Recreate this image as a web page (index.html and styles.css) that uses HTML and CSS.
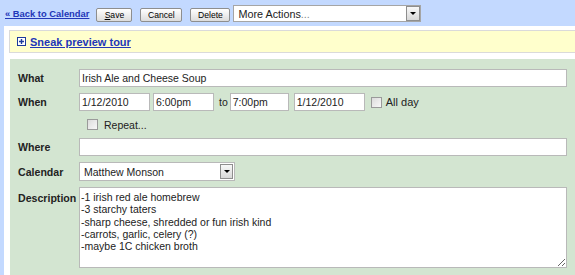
FILE: index.html
```html
<!DOCTYPE html>
<html lang="en">
<head>
    <meta charset="UTF-8">
    <title>Edit event</title>
    <link rel="stylesheet" href="styles.css">
</head>
<body>
    <div class="page">
        <div class="toolbar">
            <a class="back-link" href="#">&laquo; Back to Calendar</a>
            <span class="btn btn-save"><u>S</u>ave</span>
            <span class="btn btn-cancel">Cancel</span>
            <span class="btn btn-delete">Delete</span>
            <div class="actions-select">
                <span class="actions-text">More Actions<span class="dots">...</span></span>
                <span class="drop-btn"><span class="tri"></span></span>
            </div>
        </div>

        <div class="main">
            <div class="tour-box">
                <svg class="plus-icon" width="9" height="9" viewBox="0 0 9 9">
                    <rect x="0.5" y="0.5" width="8" height="8" fill="#fff" stroke="#1d3a9c"/>
                    <path d="M2 4.5h5M4.5 2v5" stroke="#1d3a9c" stroke-width="1.4"/>
                </svg>
                <a class="tour-link" href="#">Sneak preview tour</a>
            </div>

            <div class="event-panel">
                <div class="field-label">What</div>
                <div class="field"><div class="text-input wide">Irish Ale and Cheese Soup</div></div>

                <div class="field-label">When</div>
                <div class="field when-row">
                    <div class="text-input date">1/12/2010</div>
                    <div class="text-input time1">6:00pm</div>
                    <span class="to">to</span>
                    <div class="text-input time2">7:00pm</div>
                    <div class="text-input date date2">1/12/2010</div>
                    <span class="checkbox"></span>
                    <span class="allday">All day</span>
                </div>

                <div class="field-label"></div>
                <div class="field repeat-row">
                    <span class="checkbox"></span>
                    <span class="repeat">Repeat...</span>
                </div>

                <div class="field-label">Where</div>
                <div class="field"><div class="text-input wide"></div></div>

                <div class="field-label">Calendar</div>
                <div class="field">
                    <div class="cal-select">
                        <span>Matthew Monson</span>
                        <span class="drop-btn small"><span class="tri"></span></span>
                    </div>
                </div>

                <div class="field-label label-top">Description</div>
                <div class="field">
                    <textarea class="description" readonly>-1 irish red ale homebrew
-3 starchy taters
-sharp cheese, shredded or fun irish kind
-carrots, garlic, celery (?)
-maybe 1C chicken broth</textarea>
                </div>
            </div>
        </div>
    </div>
</body>
</html>
```

FILE: styles.css
```css
/* Event edit page */
body {
    margin: 0;
    font-family: "Liberation Sans", Arial, sans-serif;
    color: #222;
}

.page {
    background-color: #c3d9ff;
    padding-left: 4px;
    height: 275px;
    overflow: hidden;
}

.toolbar {
    height: 26px;
    display: flex;
    align-items: center;
    padding-left: 1px;
    padding-top: 4px;
    box-sizing: border-box;
}

.back-link {
    color: #2236b8;
    font-size: 9.4px;
    font-weight: bold;
    margin-right: 7px;
    margin-top: -3px;
}

.btn {
    display: inline-flex;
    align-items: center;
    justify-content: center;
    box-sizing: border-box;
    height: 14px;
    margin-right: 8px;
    margin-top: -1px;
    border: 1px solid #8e8e8e;
    border-radius: 2px;
    background: linear-gradient(#ffffff, #dcdcdc);
    font-size: 8.6px;
    color: #000;
}

.btn-save { width: 36px; }
.btn-cancel { width: 42px; }
.btn-delete { width: 40px; margin-right: 3px; }

.actions-select {
    width: 188px;
    height: 17px;
    box-sizing: border-box;
    margin-top: -3px;
    background: #fff;
    border: 1px solid #a5a5a5;
    display: flex;
    align-items: center;
    justify-content: space-between;
    padding-left: 4px;
}

.actions-text {
    font-size: 10.8px;
    color: #222;
}

.dots {
    color: #888;
}

.drop-btn {
    width: 14px;
    height: 15px;
    box-sizing: border-box;
    border: 1px solid #8e8e8e;
    background: linear-gradient(#f8f8f8, #d8d8d8);
    display: flex;
    align-items: center;
    justify-content: center;
}

.drop-btn.small {
    width: 13px;
    height: 15px;
    margin-right: 1px;
}

.tri {
    width: 0;
    height: 0;
    border-left: 3px solid transparent;
    border-right: 3px solid transparent;
    border-top: 3px solid #000;
}

.main {
    background: #fff;
    padding: 4px 0 0 5px;
    height: 249px;
}

.tour-box {
    height: 23px;
    box-sizing: border-box;
    background: #ffffcc;
    border: 1px solid #dadada;
    border-right: none;
    display: flex;
    align-items: center;
    padding-left: 7px;
    margin-bottom: 6px;
}

.plus-icon {
    margin-right: 4px;
}

.tour-link {
    color: #2236b8;
    font-size: 11px;
    font-weight: bold;
}

.event-panel {
    background: #d3e5d1;
    margin-left: 1px;
    padding: 10px 8px 40px 8px;
    display: grid;
    grid-template-columns: 61px 1fr;
    grid-template-rows: 18px 18px 15px 18px 19px 81px;
    row-gap: 6px;
}

.field-label {
    font-size: 10.6px;
    font-weight: bold;
    color: #222;
    display: flex;
    align-items: center;
}

.label-top {
    align-items: flex-start;
    padding-top: 5px;
}

.field {
    display: flex;
    align-items: center;
    font-size: 10.5px;
}

.text-input {
    height: 18px;
    box-sizing: border-box;
    background: #fff;
    border: 1px solid #b9b9b9;
    padding-left: 2px;
    display: flex;
    align-items: center;
    font-size: 10.5px;
    color: #222;
}

.wide { width: 100%; }
.date { width: 71px; margin-right: 3px; }
.time1 { width: 61px; }
.time2 { width: 59px; margin-right: 5px; }
.date2 { margin-right: 6px; }

.to {
    margin: 0 2px 0 5px;
}

.checkbox {
    width: 9px;
    height: 9px;
    border: 1px solid #9a9a9a;
    background: linear-gradient(135deg, #dcdcdc, #f8f8f8);
    margin-right: 4px;
}

.allday {
    font-size: 11px;
}

.repeat-row {
    padding-left: 8px;
}

.repeat-row .checkbox {
    margin-right: 6px;
}

.cal-select {
    width: 156px;
    height: 19px;
    box-sizing: border-box;
    background: #fff;
    border: 1px solid #b9b9b9;
    display: flex;
    align-items: center;
    justify-content: space-between;
    padding-left: 4px;
}

.description {
    width: 100%;
    height: 81px;
    box-sizing: border-box;
    border: 1px solid #b9b9b9;
    font-family: "Liberation Sans", Arial, sans-serif;
    font-size: 10.5px;
    line-height: 12.3px;
    color: #222;
    padding: 3px 1px;
    margin: 0;
    outline: none;
}
```
